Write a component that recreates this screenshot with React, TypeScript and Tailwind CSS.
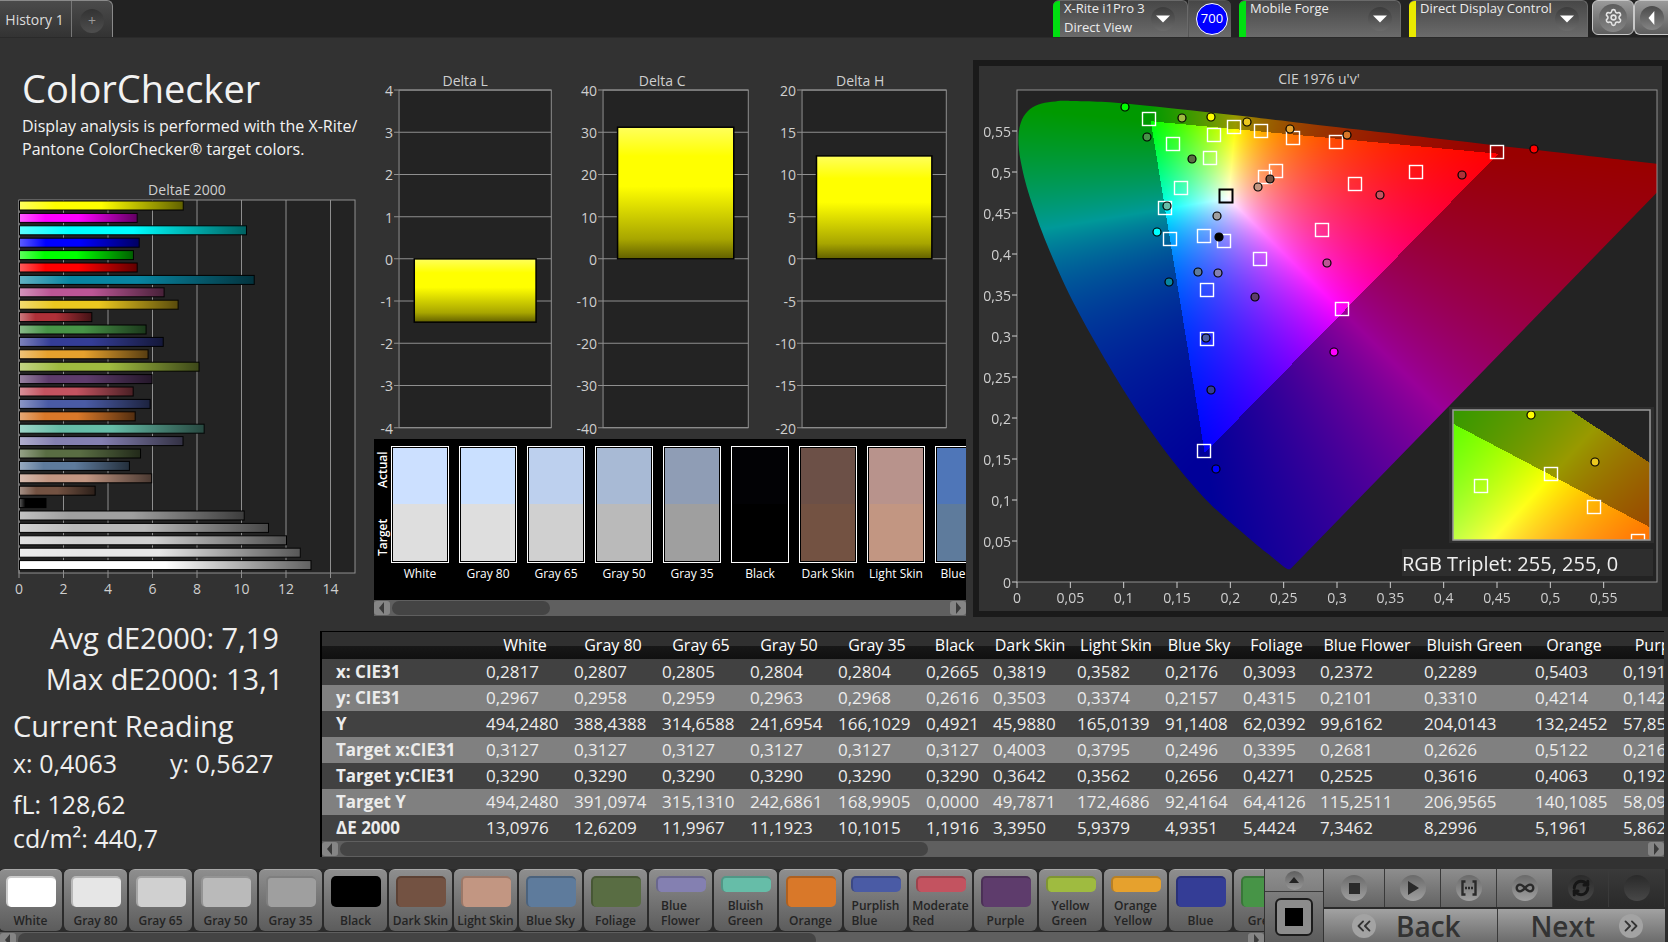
import React, { useLayoutEffect, useRef } from "react";
import { ChevronsLeft, ChevronsRight, Infinity as InfinityIcon, RefreshCw, Settings } from "lucide-react";

type Patch = {
  name: string;
  lines?: string[];
  color: string;
};

const PATCHES: Patch[] = [
  { name: "White", color: "#ffffff" },
  { name: "Gray 80", color: "#e6e6e6" },
  { name: "Gray 65", color: "#d0d0d0" },
  { name: "Gray 50", color: "#bababa" },
  { name: "Gray 35", color: "#9f9f9f" },
  { name: "Black", color: "#000000" },
  { name: "Dark Skin", color: "#735242" },
  { name: "Light Skin", color: "#c29682" },
  { name: "Blue Sky", color: "#5e7b9c" },
  { name: "Foliage", color: "#596d43" },
  { name: "Blue Flower", lines: ["Blue", "Flower"], color: "#8480b1" },
  { name: "Bluish Green", lines: ["Bluish", "Green"], color: "#66bda8" },
  { name: "Orange", color: "#d97829" },
  { name: "Purplish Blue", lines: ["Purplish", "Blue"], color: "#4a5ba5" },
  { name: "Moderate Red", lines: ["Moderate", "Red"], color: "#c35360" },
  { name: "Purple", color: "#5e3c6c" },
  { name: "Yellow Green", lines: ["Yellow", "Green"], color: "#9fbb40" },
  { name: "Orange Yellow", lines: ["Orange", "Yellow"], color: "#e6a12d" },
  { name: "Blue", color: "#343d96" },
  { name: "Green", color: "#479447" },
];

const DELTA_E: [string, number][] = [
  ["#ffff00", 7.36], ["#ff00ff", 5.29], ["#00ffff", 10.2], ["#0000ff", 5.38], ["#00ff00", 5.12],
  ["#ff0000", 5.29], ["#0885a1", 10.55], ["#bb5695", 6.5], ["#ebc71f", 7.13], ["#af3038", 3.25],
  ["#479447", 5.69], ["#343d96", 6.46], ["#e6a12d", 5.78], ["#9fbb40", 8.07], ["#5e3c6c", 5.96],
  ["#c35360", 5.11], ["#4a5ba5", 5.87], ["#d97829", 5.2], ["#66bda8", 8.3], ["#8480b1", 7.35],
  ["#596d43", 5.44], ["#5e7b9c", 4.94], ["#c29682", 5.94], ["#735242", 3.4], ["#000000", 1.19],
  ["#9f9f9f", 10.1], ["#bababa", 11.19], ["#d0d0d0", 12], ["#e6e6e6", 12.62], ["#ffffff", 13.1],
];

const SWATCHES = [
  { name: "White", actual: "#cce0ff", target: "#dedede" },
  { name: "Gray 80", actual: "#cae0ff", target: "#dedede" },
  { name: "Gray 65", actual: "#bdd0ee", target: "#d0d0d0" },
  { name: "Gray 50", actual: "#a8bad5", target: "#bababa" },
  { name: "Gray 35", actual: "#8f9db5", target: "#9f9f9f" },
  { name: "Black", actual: "#020205", target: "#000000" },
  { name: "Dark Skin", actual: "#6c5047", target: "#735242" },
  { name: "Light Skin", actual: "#b8938c", target: "#c29682" },
  { name: "Blue Sky", actual: "#4f76b8", target: "#5e7b9c" },
];

const COLUMNS = [
  "White", "Gray 80", "Gray 65", "Gray 50", "Gray 35", "Black", "Dark Skin", "Light Skin",
  "Blue Sky", "Foliage", "Blue Flower", "Bluish Green", "Orange", "Purplish Blue",
];

const COLUMN_CLASSES = [
  "w-[88px]", "w-[88px]", "w-[88px]", "w-[88px]", "w-[88px]", "w-[67px]", "w-[84px]", "w-[88px]",
  "w-[78px]", "w-[77px]", "w-[104px]", "w-[111px]", "w-[88px]", "w-[132px]",
];

const ROWS: [string, string[]][] = [
  ["x: CIE31", ["0,2817", "0,2807", "0,2805", "0,2804", "0,2804", "0,2665", "0,3819", "0,3582", "0,2176", "0,3093", "0,2372", "0,2289", "0,5403", "0,1912"]],
  ["y: CIE31", ["0,2967", "0,2958", "0,2959", "0,2963", "0,2968", "0,2616", "0,3503", "0,3374", "0,2157", "0,4315", "0,2101", "0,3310", "0,4214", "0,1425"]],
  ["Y", ["494,2480", "388,4388", "314,6588", "241,6954", "166,1029", "0,4921", "45,9880", "165,0139", "91,1408", "62,0392", "99,6162", "204,0143", "132,2452", "57,8512"]],
  ["Target x:CIE31", ["0,3127", "0,3127", "0,3127", "0,3127", "0,3127", "0,3127", "0,4003", "0,3795", "0,2496", "0,3395", "0,2681", "0,2626", "0,5122", "0,2164"]],
  ["Target y:CIE31", ["0,3290", "0,3290", "0,3290", "0,3290", "0,3290", "0,3290", "0,3642", "0,3562", "0,2656", "0,4271", "0,2525", "0,3616", "0,4063", "0,1920"]],
  ["Target Y", ["494,2480", "391,0974", "315,1310", "242,6861", "168,9905", "0,0000", "49,7871", "172,4686", "92,4164", "64,4126", "115,2511", "206,9565", "140,1085", "58,0931"]],
  ["ΔE 2000", ["13,0976", "12,6209", "11,9967", "11,1923", "10,1015", "1,1916", "3,3950", "5,9379", "4,9351", "5,4424", "7,3462", "8,2996", "5,1961", "5,8624"]],
];

/* ---------- colour science helpers ---------- */

// Spectral locus as CIE 1931 xy pairs, 380 nm to 700 nm.
const LOCUS: [number, number][] = [
  [0.1741, 0.005], [0.1714, 0.0051], [0.1644, 0.0109], [0.1566, 0.0177], [0.144, 0.0297],
  [0.1355, 0.0399], [0.1241, 0.0578], [0.1096, 0.0868], [0.0913, 0.1327], [0.0687, 0.2007],
  [0.0454, 0.295], [0.0235, 0.4127], [0.0082, 0.5384], [0.0039, 0.6548], [0.0139, 0.7502],
  [0.0389, 0.812], [0.0743, 0.8338], [0.1142, 0.8262], [0.1547, 0.8059], [0.2296, 0.7543],
  [0.3016, 0.6923], [0.3731, 0.6245], [0.4441, 0.5547], [0.5125, 0.4866], [0.627, 0.3725],
  [0.6915, 0.3083], [0.719, 0.2809], [0.7347, 0.2653],
];

const PLOT_W = 640;
const PLOT_H = 492;
const U_SCALE = PLOT_W / 0.6;
const V_SCALE = PLOT_H / 0.6;

const LOCUS_PX = LOCUS.map(([x, y]) => {
  const d = -2 * x + 12 * y + 3;
  return [((4 * x) / d) * U_SCALE, PLOT_H - ((9 * y) / d) * V_SCALE];
});

function smoothLocus(): string {
  const p = LOCUS_PX;
  let d = `M${p[0][0].toFixed(1)} ${p[0][1].toFixed(1)}`;
  for (let i = 0; i < p.length - 1; i++) {
    const a = p[Math.max(i - 1, 0)];
    const b = p[i];
    const c = p[i + 1];
    const e = p[Math.min(i + 2, p.length - 1)];
    d += `C${(b[0] + (c[0] - a[0]) / 6).toFixed(1)} ${(b[1] + (c[1] - a[1]) / 6).toFixed(1)} ${(c[0] - (e[0] - b[0]) / 6).toFixed(1)} ${(c[1] - (e[1] - b[1]) / 6).toFixed(1)} ${c[0].toFixed(1)} ${c[1].toFixed(1)}`;
  }
  return d + "Z";
}
const LOCUS_PATH = smoothLocus();

// Chromaticity to RGB at full brightness, kept linear; colours outside the gamut are dimmed.
function chromaToRgb(x: number, y: number): [number, number, number] {
  const X = x / y;
  const Z = (1 - x - y) / y;
  const lin = [
    3.2406 * X - 1.5372 - 0.4986 * Z,
    -0.9689 * X + 1.8758 + 0.0415 * Z,
    0.0557 * X - 0.204 + 1.057 * Z,
  ];
  const outside = Math.min(lin[0], lin[1], lin[2]) < 0;
  const max = Math.max(lin[0], lin[1], lin[2]);
  const level = outside ? 153 : 255;
  return lin.map((c) => Math.max(0, c / max) * level) as [number, number, number];
}

type FieldProps = { width: number; height: number; toXy: (px: number, py: number) => [number, number] | null };

function ChromaField({ width, height, toXy }: FieldProps) {
  const ref = useRef<HTMLCanvasElement>(null);
  useLayoutEffect(() => {
    const ctx = ref.current?.getContext("2d");
    if (!ctx) return;
    const img = ctx.createImageData(width, height);
    for (let j = 0; j < height; j++) {
      for (let i = 0; i < width; i++) {
        const xy = toXy(i, j);
        if (!xy) continue;
        const [r, g, b] = chromaToRgb(xy[0], xy[1]);
        const o = (j * width + i) * 4;
        img.data[o] = r;
        img.data[o + 1] = g;
        img.data[o + 2] = b;
        img.data[o + 3] = 255;
      }
    }
    ctx.putImageData(img, 0, 0);
  }, [width, height, toXy]);
  return <canvas ref={ref} width={width} height={height} className="block" />;
}

const uvField = (px: number, py: number): [number, number] | null => {
  const u = px / U_SCALE;
  const v = (PLOT_H - py) / V_SCALE;
  const d = 6 * u - 16 * v + 12;
  return v <= 0 ? null : [(9 * u) / d, (4 * v) / d];
};

const insetField = (px: number, py: number): [number, number] | null => {
  const x = 0.4193 + (px - 98) / 1600;
  const y = 0.5053 - (py - 65) / 1060;
  return x + y > 0.998 ? null : [x, y];
};

const TARGETS: [number, number][] = [
  [132, 29], [156, 54], [197, 45], [193, 68], [217, 37], [244, 41], [276, 48], [319, 52], [480, 62],
  [399, 82], [338, 94], [259, 81], [248, 87], [164, 98], [148, 118], [153, 149], [187, 146], [207, 151],
  [243, 169], [305, 140], [190, 200], [325, 219], [190, 249], [187, 361],
];

const READINGS: [number, number, string][] = [
  [108, 17, "#00ff00"], [165, 28, "#9fbb40"], [194, 27, "#ffff00"], [230, 32, "#ebc71f"], [273, 39, "#e6a12d"],
  [330, 45, "#d97829"], [517, 59, "#ff0000"], [445, 85, "#af3038"], [363, 105, "#c35360"], [253, 89, "#735242"],
  [241, 97, "#c29682"], [130, 47, "#479447"], [175, 69, "#596d43"], [150, 116, "#66bda8"], [200, 126, "#9f9f9f"],
  [140, 142, "#00ffff"], [202, 147, "#000000"], [181, 182, "#5e7b9c"], [201, 183, "#8480b1"], [152, 192, "#0885a1"],
  [310, 173, "#bb5695"], [238, 207, "#5e3c6c"], [189, 248, "#4a5ba5"], [317, 262, "#ff00ff"], [194, 300, "#343d96"],
  [199, 379, "#0000ff"],
];

/* ---------- charts ---------- */

const axisText = "fill-[#cfcfcf] text-[14px]";

function DeltaEChart() {
  const unit = 22.25;
  return (
    <svg viewBox="0 0 374 430" className="block w-full" role="img" aria-label="DeltaE 2000">
      <defs>
        <linearGradient id="sheenX" x1="0" x2="1" y1="0" y2="0">
          <stop offset="0" stopColor="#fff" stopOpacity="0.36" />
          <stop offset="0.22" stopColor="#fff" stopOpacity="0" />
          <stop offset="0.5" stopColor="#000" stopOpacity="0" />
          <stop offset="1" stopColor="#000" stopOpacity="0.62" />
        </linearGradient>
      </defs>
      <text x="187" y="15" textAnchor="middle" className={axisText}>DeltaE 2000</text>
      <rect x="19" y="20" width="336" height="373" fill="#232323" stroke="#8f8f8f" />
      {[0, 2, 4, 6, 8, 10, 12, 14].map((t) => (
        <g key={t}>
          <line x1={19 + t * unit} x2={19 + t * unit} y1="20" y2="398" stroke="#8f8f8f" />
          <text x={19 + t * unit} y="414" textAnchor="middle" className={axisText}>{t}</text>
        </g>
      ))}
      {DELTA_E.map(([color, value], i) => (
        <g key={i}>
          <rect x="19.5" y={21 + i * 12.4} width={value * unit} height="9" fill={color} />
          <rect x="19.5" y={21 + i * 12.4} width={value * unit} height="9" fill="url(#sheenX)" stroke="#000" />
        </g>
      ))}
    </svg>
  );
}

type DeltaProps = { title: string; max: number; step: number; value: number; left: number };

function DeltaChart({ title, max, step, value, left }: DeltaProps) {
  const top = 52;
  const height = 337;
  const width = 177 - left;
  const zero = top + height / 2;
  const y = (v: number) => zero - (v / max) * (height / 2);
  const ticks = Array.from({ length: 9 }, (_, i) => max - i * step);
  const id = `sheen${title.slice(-1)}`;
  return (
    <svg viewBox="0 0 197 400" className="block w-full min-w-0 flex-1" role="img" aria-label={title}>
      <defs>
        <linearGradient id={id} x1="0" x2="0" y1="0" y2="1">
          <stop offset="0" stopColor="#ffff5c" />
          <stop offset="0.22" stopColor="#ffff00" />
          <stop offset="0.45" stopColor="#ffff00" />
          <stop offset="0.85" stopColor="#a8a600" />
          <stop offset="1" stopColor="#626000" />
        </linearGradient>
      </defs>
      <text x="91" y="48" textAnchor="middle" className={axisText}>{title}</text>
      <rect x={left} y={top} width={width} height={height} fill="#232323" stroke="#8f8f8f" />
      {ticks.map((t) => (
        <g key={t}>
          <line x1={left - 5} x2="177" y1={y(t)} y2={y(t)} stroke="#8f8f8f" />
          <text x={left - 6} y={y(t) + 6} textAnchor="end" className={axisText}>{t}</text>
        </g>
      ))}
      <rect
        x={left + width * 0.1}
        y={Math.min(y(value), zero)}
        width={width * 0.8}
        height={Math.abs(y(value) - zero)}
        fill={`url(#${id})`}
        stroke="#000"
        strokeWidth="1.5"
      />
    </svg>
  );
}

function Target({ x, y, black }: { x: number; y: number; black?: boolean }) {
  return <rect x={x - 6.5} y={y - 6.5} width="13" height="13" fill="none" stroke={black ? "#000" : "#fff"} strokeWidth={black ? 2 : 1.4} />;
}

function CieChart() {
  const ticks = Array.from({ length: 12 }, (_, i) => i * 5);
  const label = (t: number) => (t === 0 ? "0" : `0,${t % 10 === 0 ? t / 10 : String(t).padStart(2, "0")}`);
  return (
    <svg viewBox="0 0 683 545" className="block w-full bg-[#323232]" role="img" aria-label="CIE 1976 u'v' chromaticity diagram">
      <defs>
        <clipPath id="locus"><path d={LOCUS_PATH} /></clipPath>
        <clipPath id="plot"><rect width={PLOT_W} height={PLOT_H} /></clipPath>
        <clipPath id="inset"><rect width="197" height="130" /></clipPath>
      </defs>
      <text x="340" y="18" textAnchor="middle" className={axisText}>CIE 1976 u'v'</text>
      <g transform="translate(38 24)">
        <rect width={PLOT_W} height={PLOT_H} fill="#232323" />
        <g clipPath="url(#plot)">
          <g clipPath="url(#locus)">
            <foreignObject width={PLOT_W} height={PLOT_H}>
              <ChromaField width={PLOT_W} height={PLOT_H} toXy={uvField} />
            </foreignObject>
          </g>
        </g>
        <rect width={PLOT_W} height={PLOT_H} fill="none" stroke="#8f8f8f" />
        {ticks.map((t) => (
          <g key={t}>
            <line x1={(t / 100) * U_SCALE} x2={(t / 100) * U_SCALE} y1={PLOT_H} y2={PLOT_H + 6} stroke="#cfcfcf" />
            <text x={(t / 100) * U_SCALE} y={PLOT_H + 21} textAnchor="middle" className={axisText}>{label(t)}</text>
            <line x1="-5" x2="0" y1={PLOT_H - (t / 100) * V_SCALE} y2={PLOT_H - (t / 100) * V_SCALE} stroke="#cfcfcf" />
            <text x="-6" y={PLOT_H - (t / 100) * V_SCALE + 6} textAnchor="end" className={axisText}>{label(t)}</text>
          </g>
        ))}
        {TARGETS.map(([x, y]) => <Target key={`${x}-${y}`} x={x} y={y} />)}
        <Target x={209} y={106} black />
        {READINGS.map(([x, y, c]) => <circle key={`${x}-${y}`} cx={x} cy={y} r="4" fill={c} stroke="#000" strokeWidth="1.2" />)}
        <g transform="translate(436 320)">
          <rect x="-4" y="-3" width="205" height="136" fill="#2e2e2e" />
          <rect width="197" height="130" fill="#232323" />
          <g clipPath="url(#inset)">
            <foreignObject width="197" height="130">
              <ChromaField width={197} height={130} toXy={insetField} />
            </foreignObject>
            <Target x={28} y={76} />
            <Target x={98} y={64} />
            <Target x={141} y={97} />
            <Target x={185} y={131} />
            <circle cx="78" cy="5" r="4" fill="#ffff00" stroke="#000" strokeWidth="1.2" />
            <circle cx="142" cy="52" r="4" fill="#ebc71f" stroke="#000" strokeWidth="1.2" />
          </g>
          <rect width="197" height="130" fill="none" stroke="#9a9a9a" strokeWidth="1.5" />
        </g>
        <rect x="385" y="459" width="251" height="27" fill="#2e2e2e" />
        <text x="385" y="481" className="fill-[#efefef] text-[20px]">RGB Triplet: 255, 255, 0</text>
      </g>
    </svg>
  );
}

/* ---------- controls ---------- */

function ArrowGlyph({ dir, large }: { dir: "left" | "right" | "up" | "down"; large?: boolean }) {
  const points = {
    left: "8,0 3,6 8,12",
    right: "4,0 9,6 4,12",
    up: "1,9 6,3 11,9",
    down: "0,3 6,9 12,3",
  }[dir];
  return (
    <svg viewBox="0 0 12 12" className={`shrink-0 ${large ? "size-[14px]" : "size-3"}`} aria-hidden="true">
      <polygon points={points} fill="currentColor" />
    </svg>
  );
}

function ScrollBar({ thumb, label }: { thumb: string; label: string }) {
  return (
    <div className="flex h-4 items-center bg-[#5f5f5f]">
      <button aria-label={`Scroll ${label} left`} className="flex h-[14px] w-4 items-center justify-center rounded-[3px] bg-[#858585] text-[#3a3a3a]">
        <ArrowGlyph dir="left" />
      </button>
      <div className="mx-0.5 h-[14px] min-w-0 flex-1">
        <div className={`h-full rounded-full bg-[#444444] ${thumb}`} />
      </div>
      <button aria-label={`Scroll ${label} right`} className="flex h-[14px] w-4 items-center justify-center rounded-[3px] bg-[#858585] text-[#3a3a3a]">
        <ArrowGlyph dir="right" />
      </button>
    </div>
  );
}

function RoundArrow() {
  return (
    <span className="flex size-6 shrink-0 items-center justify-center rounded-full bg-linear-to-b from-[#3c3c3c] to-[#6b6b6b] text-white">
      <ArrowGlyph dir="down" large />
    </span>
  );
}

function DeviceButton({ lines, bar, className }: { lines: string[]; bar: string; className: string }) {
  return (
    <button className={`flex h-[37px] overflow-hidden rounded-t-md border-t border-r border-[#6a6a6a] bg-linear-to-b from-[#474747] to-[#6b6b6b] text-left ${className}`}>
      <span className={`h-full w-[7px] shrink-0 ${bar}`} />
      <span className="-mt-0.5 flex min-w-0 flex-1 flex-col pl-1 text-[13px] leading-[19px] whitespace-nowrap text-[#ececec]">
        {lines.map((l) => <span key={l}>{l}</span>)}
      </span>
      <span className="flex h-full w-6 shrink-0 items-center"><RoundArrow /></span>
    </button>
  );
}

function Header() {
  return (
    <header className="flex h-[38px] items-start border-b border-[#2a2a2a] bg-[#222222]">
      <div className="flex h-[37px] rounded-tr-md border-t border-r border-[#8a8a8a] bg-linear-to-b from-[#4b4b4b] to-[#333333]">
        <button className="w-[72px] border-r border-[#777777] pr-0.5 text-[14px] text-[#dcdcdc]">History 1</button>
        <button aria-label="Add tab" className="flex w-10 items-center justify-center">
          <span className="mt-1 flex size-6 items-center justify-center rounded-full bg-linear-to-b from-[#333333] to-[#4e4e4e] text-[14px] leading-none text-[#9a9a9a]">+</span>
        </button>
      </div>
      <div className="ml-auto flex gap-2">
        <div className="flex">
          <DeviceButton lines={["X-Rite i1Pro 3", "Direct View"]} bar="bg-[#00e010]" className="w-[135px] pr-3" />
          <div className="flex h-[37px] w-[43px] items-center justify-end rounded-tr-md border-t border-l border-[#555555] bg-linear-to-b from-[#474747] to-[#6b6b6b] pr-[3px]">
            <span className="flex size-8 items-center justify-center rounded-full border border-white bg-[#0000ff] text-[13px] text-white">700</span>
          </div>
        </div>
        <DeviceButton lines={["Mobile Forge"]} bar="bg-[#00e010]" className="w-[162px] pr-2" />
        <DeviceButton lines={["Direct Display Control"]} bar="bg-[#eaea00]" className="w-[179px] pr-2" />
      </div>
      <div className="ml-1 flex">
        <button aria-label="Settings" className="flex h-[35px] w-[42px] items-center justify-center rounded-md border border-[#c8c8c8] bg-linear-to-b from-[#9a9a9a] to-[#5e5e5e]">
          <span className="flex size-7 items-center justify-center rounded-full bg-linear-to-b from-[#5c5c5c] to-[#858585] text-[#e4e4e4]">
            <Settings size={19} strokeWidth={2} />
          </span>
        </button>
        <button aria-label="Collapse panel" className="flex h-[35px] w-[34px] items-center justify-center rounded-l-md border border-r-0 border-[#c8c8c8] bg-linear-to-b from-[#9a9a9a] to-[#5e5e5e]">
          <span className="flex size-6 items-center justify-center rounded-full bg-linear-to-b from-[#4a4a4a] to-[#858585] text-white">
            <ArrowGlyph dir="left" large />
          </span>
        </button>
      </div>
    </header>
  );
}

function SwatchPanel() {
  return (
    <div>
      <div className="flex h-[161px] overflow-hidden bg-black pt-[7px] text-[12px] text-white">
        <div className="flex w-[17px] shrink-0 flex-col">
          <span className="flex h-12 rotate-180 items-center justify-center font-semibold [writing-mode:vertical-rl]">Actual</span>
          <span className="flex h-[86px] rotate-180 items-center justify-center font-semibold [writing-mode:vertical-rl]">Target</span>
        </div>
        <ul className="flex min-w-0 gap-[10px]">
          {SWATCHES.map((s) => (
            <li key={s.name} className="flex w-[58px] shrink-0 flex-col items-center">
              <div className="flex h-[117px] w-full flex-col border border-white p-px">
                <div className="flex-1" style={{ background: s.actual }} />
                <div className="flex-1" style={{ background: s.target }} />
              </div>
              <span className="leading-[22px] whitespace-nowrap">{s.name}</span>
            </li>
          ))}
        </ul>
      </div>
      <ScrollBar thumb="w-[28.5%]" label="swatches" />
    </div>
  );
}

function ReadingTable() {
  return (
    <section className="mt-[14px] mr-1 min-w-0 flex-1 border-t border-l-2 border-black">
      <div className="overflow-hidden">
        <table className="w-full min-w-[1339px] table-fixed border-collapse text-[17px] whitespace-nowrap text-[#ececec]">
          <thead>
            <tr className="h-[27px] bg-linear-to-b from-[#303030] from-50% via-[#181818] via-50% to-[#101010]">
              <td className="w-[159px]" />
              {COLUMNS.map((c, i) => (
                <th key={c} scope="col" className={`p-0 text-center text-[16px] leading-[27px] font-normal text-white ${COLUMN_CLASSES[i]}`}>{c}</th>
              ))}
            </tr>
          </thead>
          <tbody>
            {ROWS.map(([name, values]) => (
              <tr key={name} className="h-[26px] odd:bg-[#414141] even:bg-[#808080]">
                <th scope="row" className="p-0 pl-[14px] text-left leading-[26px] font-bold">{name}</th>
                {values.map((v, i) => <td key={i} className="p-0 pl-[5px] leading-[26px]">{v}</td>)}
              </tr>
            ))}
          </tbody>
        </table>
      </div>
      <ScrollBar thumb="w-[45%]" label="table" />
    </section>
  );
}

function Summary() {
  return (
    <section className="w-[320px] shrink-0 pl-[13px] text-[#efefef]">
      <div className="pr-1 text-center text-[29px] leading-[41px]">
        <p>Avg dE2000: 7,19</p>
        <p>Max dE2000: 13,1</p>
      </div>
      <h2 className="mt-[7px] text-[29px] leading-10">Current Reading</h2>
      <div className="text-[25px] leading-[34px]">
        <p className="flex"><span className="w-[157px]">x: 0,4063</span><span>y: 0,5627</span></p>
        <p className="mt-[7px]">fL: 128,62</p>
        <p>cd/m²: 440,7</p>
      </div>
    </section>
  );
}

function PatchButton({ patch }: { patch: Patch }) {
  return (
    <button className="flex h-[62px] w-[63px] shrink-0 flex-col items-center overflow-hidden rounded-md border-t border-[#a8a8a8] bg-linear-to-b from-[#8e8e8e] to-[#5c5c5c] pt-1.5 text-[12px] leading-[15px] font-semibold whitespace-nowrap text-[#242424]">
      <span
        className={`w-[50px] shrink-0 rounded-[5px] border-t-2 border-l-2 border-black/20 ${patch.lines ? "h-4" : "h-[31px]"}`}
        style={{ backgroundColor: patch.color }}
      />
      <span className="mt-auto mb-[3px] flex flex-col items-start">
        {(patch.lines ?? [patch.name]).map((l) => <span key={l}>{l}</span>)}
      </span>
    </button>
  );
}

function TransportButton({ label, dark, children }: { label: string; dark?: boolean; children?: React.ReactNode }) {
  return (
    <button
      aria-label={label}
      className={`flex h-[38px] w-14 items-center justify-center border-r border-[#3a3a3a] bg-linear-to-b first:grow ${dark ? "from-[#3a3a3a] to-[#2a2a2a]" : "from-[#8e8e8e] to-[#646464]"}`}
    >
      <span className={`flex size-[26px] items-center justify-center rounded-full bg-linear-to-b ${dark ? "from-[#2a2a2a] to-[#484848] text-[#161616]" : "from-[#6a6a6a] to-[#a0a0a0] text-[#2a2a2a]"}`}>
        {children}
      </span>
    </button>
  );
}

function Footer() {
  return (
    <footer className="mt-auto flex h-[73px] overflow-hidden bg-[#2b2b2b]">
      <div className="min-w-0 flex-1 overflow-hidden">
        <div className="-ml-px flex gap-0.5 overflow-hidden pb-px">
          {PATCHES.map((p) => <PatchButton key={p.name} patch={p} />)}
        </div>
        <ScrollBar thumb="w-[65%]" label="patches" />
      </div>
      <div className="flex w-[60px] shrink-0 flex-col border-x border-[#333333]">
        <button aria-label="Expand patches" className="flex h-[23px] items-center justify-center border-b border-[#3a3a3a] bg-linear-to-b from-[#8e8e8e] to-[#808080]">
          <span className="flex size-[19px] items-center justify-center rounded-full bg-linear-to-b from-[#5f5f5f] to-[#999999] text-[#222222]"><ArrowGlyph dir="up" /></span>
        </button>
        <button aria-label="Current patch" className="flex flex-1 items-center justify-center bg-linear-to-b from-[#7d7d7d] to-[#5c5c5c]">
          <span className="flex size-[38px] items-center justify-center rounded-md border-2 border-[#1c1c1c] bg-[#8c8c8c]">
            <span className="size-[18px] bg-black" />
          </span>
        </button>
      </div>
      <div className="mr-[3px] w-[341px] shrink-0">
        <div className="flex">
          <TransportButton label="Stop"><span className="size-[11px] bg-[#2a2a2a]" /></TransportButton>
          <TransportButton label="Play">
            <svg viewBox="0 0 12 14" className="h-[14px] w-3" aria-hidden="true"><polygon points="1,0 12,7 1,14" fill="currentColor" /></svg>
          </TransportButton>
          <TransportButton label="Measure range">
            <svg viewBox="0 0 18 16" className="h-4 w-[18px]" fill="none" stroke="currentColor" strokeWidth="2.4" aria-hidden="true">
              <path d="M5.5 1.5H2.5v13h3M12.500 1.500h3v13h-3M5 8h2M8 8h2M11 8h2" />
            </svg>
          </TransportButton>
          <TransportButton label="Continuous"><InfinityIcon size={20} strokeWidth={2.8} /></TransportButton>
          <TransportButton label="Repeat" dark><RefreshCw size={18} strokeWidth={4} /></TransportButton>
          <TransportButton label="Record" dark />
        </div>
        <div className="flex h-[35px] border-t-2 border-[#2b2b2b] text-[28px] leading-9 font-semibold text-[#333333]">
          <button className="flex flex-1 items-center gap-5 border-r border-[#3a3a3a] bg-linear-to-b from-[#a2a2a2] to-[#6c6c6c] pl-7">
            <span className="flex size-6 items-center justify-center rounded-full bg-[#a3a3a3]"><ChevronsLeft size={22} /></span>
            Back
          </button>
          <button className="flex flex-1 items-center justify-end gap-6 bg-linear-to-b from-[#a2a2a2] to-[#6c6c6c] pr-[22px]">
            Next
            <span className="flex size-6 items-center justify-center rounded-full bg-[#a3a3a3]"><ChevronsRight size={22} /></span>
          </button>
        </div>
      </div>
    </footer>
  );
}

export default function App() {
  return (
    <div className="flex min-h-screen flex-col overflow-hidden bg-[#323232] font-['Open_Sans','Noto_Sans',sans-serif]">
      <Header />
      <main className="flex flex-1 flex-col">
        <div className="flex items-start">
          <section className="w-[374px] shrink-0">
            <div className="pt-[23px] pl-[22px] text-[#f2f2f2]">
              <h1 className="text-[38px] leading-[54px]">ColorChecker</h1>
              <p className="text-[16px] leading-[23px] whitespace-nowrap">Display analysis is performed with the X-Rite/<br />Pantone ColorChecker® target colors.</p>
            </div>
            <div className="mt-[19px]"><DeltaEChart /></div>
          </section>
          <section className="w-[592px] shrink-0">
            <div className="flex">
              <DeltaChart title="Delta L" max={4} step={1} value={-1.5} left={25} />
              <DeltaChart title="Delta C" max={40} step={10} value={31.2} left={32} />
              <DeltaChart title="Delta H" max={20} step={5} value={12.2} left={33} />
            </div>
            <SwatchPanel />
          </section>
          <section className="mt-[22px] ml-[7px] min-w-0 flex-1 border-[6px] border-[#1a1a1a]">
            <CieChart />
          </section>
        </div>
        <div className="flex">
          <Summary />
          <ReadingTable />
        </div>
      </main>
      <Footer />
    </div>
  );
}
